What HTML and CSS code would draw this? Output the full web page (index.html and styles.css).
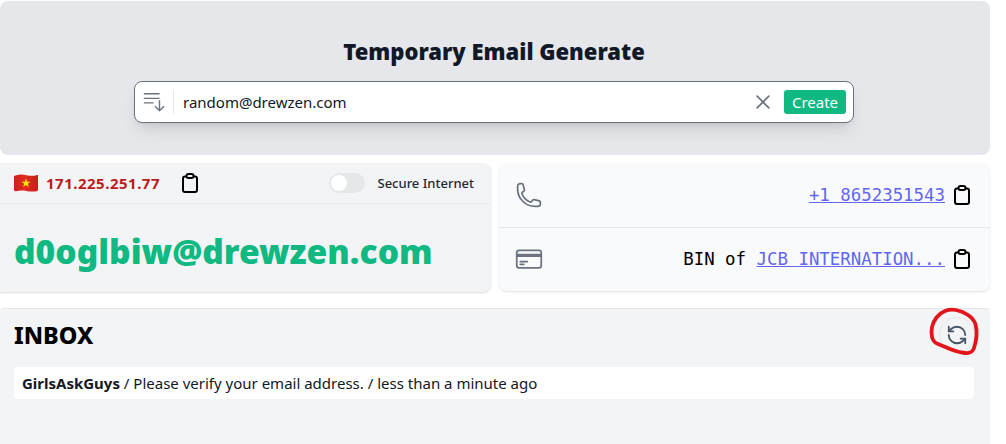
FILE: index.html
```html
<!DOCTYPE html>
<html lang="en">
<head>
<meta charset="utf-8">
<title>Temporary Email Generate</title>
<link rel="stylesheet" href="styles.css">
</head>
<body>
<div class="page">
  <header class="hero">
    <h1 class="hero-title">Temporary Email Generate</h1>
    <div class="search">
      <svg class="search-icon" viewBox="0 0 24 24" fill="none" stroke="currentColor" stroke-width="1.5" stroke-linecap="round" stroke-linejoin="round"><path d="M1.500 3h16M1.500 8h16M1.500 13h9.500M18 10.500v11M13.500 17l4.500 4.500 4.500-4.500"/></svg>
      <span class="search-value">random@drewzen.com</span>
      <svg class="clear-icon" viewBox="0 0 24 24" fill="none" stroke="currentColor" stroke-width="2" stroke-linecap="round"><path d="M5 5l14 14M19 5L5 19"/></svg>
      <button class="create">Create</button>
    </div>
  </header>
  <section class="cards">
    <div class="card-left">
      <div class="ip-row">
        <svg class="flag" viewBox="0 0 24 18"><defs><linearGradient id="flagShade" x1="0" y1="0" x2="1" y2="0"><stop offset="0" stop-color="#c8201c"/><stop offset=".45" stop-color="#e32b22"/><stop offset="1" stop-color="#c4201c"/></linearGradient></defs><path d="M1.500 1.500C7 0 9 .5 12.500 1.200S20 2 22.500 1.200 24 2 24 3v12.500c0 1-.6 1.500-1.500 1.700-3.500.7-7 .3-10.500-.3s-6.500-.5-10 .3C.8 17.400 0 16.800 0 15.800V3c0-.8.500-1.300 1.500-1.500z" fill="url(#flagShade)"/><path d="M12 4.500l1.150 3.300h3.450l-2.800 2 1.050 3.300-2.850-2-2.850 2 1.050-3.300-2.800-2h3.450z" fill="#ffe600"/></svg>
        <span class="ip">171.225.251.77</span>
        <svg class="clip clip-ip" viewBox="0 0 24 24" fill="none" stroke="currentColor" stroke-width="2" stroke-linejoin="round"><path d="M8.500 5.500H7a2 2 0 0 0-2 2V19a2 2 0 0 0 2 2h10a2 2 0 0 0 2-2V7.500a2 2 0 0 0-2-2h-1.500"/><rect x="8.500" y="3" width="7" height="4" rx="2"/></svg>
        <span class="toggle"><span class="knob"></span></span>
        <span class="secure">Secure Internet</span>
      </div>
      <div class="email">d0oglbiw@drewzen.com</div>
    </div>
    <div class="card-right">
      <div class="info-row">
        <svg class="info-icon" viewBox="0 0 24 24" fill="none" stroke="currentColor" stroke-width="1.500" stroke-linecap="round" stroke-linejoin="round"><path d="M2.250 6.750c0 8.284 6.716 15 15 15h2.250a2.250 2.250 0 0 0 2.250-2.250v-1.372c0-.516-.351-.966-.852-1.091l-4.423-1.106c-.44-.11-.902.055-1.173.417l-.97 1.293c-.282.376-.769.542-1.210.380a12.035 12.035 0 0 1-7.143-7.143c-.162-.441.004-.928.380-1.210l1.293-.970c.363-.271.527-.734.417-1.173L6.963 3.102a1.125 1.125 0 0 0-1.091-.852H4.500A2.250 2.250 0 0 0 2.250 4.500z"/></svg>
        <span class="mono"><a href="#">+1 8652351543</a></span>
        <svg class="clip" viewBox="0 0 24 24" fill="none" stroke="currentColor" stroke-width="2" stroke-linejoin="round"><path d="M8.500 5.500H7a2 2 0 0 0-2 2V19a2 2 0 0 0 2 2h10a2 2 0 0 0 2-2V7.500a2 2 0 0 0-2-2h-1.500"/><rect x="8.500" y="3" width="7" height="4" rx="2"/></svg>
      </div>
      <div class="info-row info-row-last">
        <svg class="info-icon" viewBox="0 0 24 24" fill="none" stroke="currentColor" stroke-width="1.500" stroke-linecap="round" stroke-linejoin="round"><rect x="1.500" y="4.500" width="21" height="15" rx="2"/><path d="M1.500 8.250h21M1.500 9.500h21M4.500 14.250h6M4.500 16.500h3"/></svg>
        <span class="mono">BIN of <a href="#">JCB INTERNATION...</a></span>
        <svg class="clip" viewBox="0 0 24 24" fill="none" stroke="currentColor" stroke-width="2" stroke-linejoin="round"><path d="M8.500 5.500H7a2 2 0 0 0-2 2V19a2 2 0 0 0 2 2h10a2 2 0 0 0 2-2V7.500a2 2 0 0 0-2-2h-1.500"/><rect x="8.500" y="3" width="7" height="4" rx="2"/></svg>
      </div>
    </div>
  </section>
  <section class="inbox">
    <div class="inbox-head">
      <h2 class="inbox-title">INBOX</h2>
      <span class="refresh">
        <svg viewBox="0 0 24 24" fill="none" stroke="currentColor" stroke-width="2" stroke-linecap="round" stroke-linejoin="round"><path d="M21 12a9 9 0 0 0-9-9 9.750 9.750 0 0 0-6.740 2.740L3 8"/><path d="M3 3v5h5"/><path d="M3 12a9 9 0 0 0 9 9 9.750 9.750 0 0 0 6.740-2.740L21 16"/><path d="M16 16h5v5"/></svg>
      </span>
    </div>
    <div class="message"><b>GirlsAskGuys</b> / Please verify your email address. / less than a minute ago</div>
  </section>
</div>
<svg class="annotation" viewBox="0 0 54 54" fill="none" stroke="#e3151b" stroke-width="3.800" stroke-linecap="round" stroke-linejoin="round"><path d="M29 5Q35 6 41 10Q47 14 48.500 19.500Q50 25 49.500 31Q49 37 47 43Q45 49 37.500 48Q30 47 23 44Q16 41 11 39Q6 37 5 32Q4 27 5 22Q6 17 9.500 12.500Q13 8 18 6Q23 4 29 5z"/></svg>
</body>
</html>
```
FILE: styles.css
```css
* { box-sizing: border-box; }
html, body { margin: 0; padding: 0; background: #fff; height: 444px; overflow: hidden; }
body { font-family: "Noto Sans", "Open Sans", sans-serif; color: #111827; position: relative; }
.page { width: 990px; padding-top: 1px; }

.hero { height: 154px; background: #e5e7eb; border-radius: 8px; display: flex; flex-direction: column; align-items: center; padding: 36px 2px 0 0; }
.hero-title { margin: 0; font-size: 22px; line-height: 28px; font-weight: 900; color: #111827; white-space: nowrap; }
.search { margin-top: 16px; width: 720px; height: 42px; background: #fff; border: 1px solid #6b7280; border-radius: 8px; box-shadow: 0 10px 15px -3px rgba(0,0,0,.1), 0 4px 6px -4px rgba(0,0,0,.1); display: flex; align-items: center; padding: 0 7px 0 8px; }
.search-icon { width: 22px; height: 22px; color: #6b7280; flex: none; }
.search-value { flex: 1; margin-left: 8px; padding-left: 9px; border-left: 1px solid #e5e7eb; height: 24px; line-height: 24px; font-size: 15px; color: #111827; }
.clear-icon { width: 20px; height: 20px; color: #6b7280; margin-right: 11px; flex: none; }
.create { width: 62px; height: 24px; border: 0; border-radius: 3px; background: #10b981; color: #fff; font: 15px/24px "Noto Sans", sans-serif; padding: 0; }

.cards { display: flex; align-items: flex-start; gap: 8px; margin-top: 8px; }
.card-left { width: 491px; height: 129px; background: #f3f4f6; border-radius: 0 8px 8px 0; box-shadow: 0 1px 2px rgba(0,0,0,.15); }
.ip-row { height: 41px; display: flex; align-items: center; padding: 0 17px 0 14px; border-bottom: 1px solid #e9ebef; }
.flag { width: 24px; height: 18px; flex: none; }
.ip { margin-left: 8px; font-size: 15px; font-weight: 700; color: #b91c1c; letter-spacing: .5px; }
.clip { width: 24px; height: 24px; color: #000; flex: none; margin-left: 5px; }
.clip-ip { margin-left: 18px; }
.toggle { margin-left: auto; width: 36px; height: 20px; border-radius: 10px; background: #e5e7eb; padding: 2px; display: flex; }
.knob { width: 16px; height: 16px; border-radius: 50%; background: #fff; }
.secure { margin-left: 12px; font-size: 13px; font-weight: 500; color: #1f2937; }
.email { padding: 27px 14px 0; font-size: 33.600px; line-height: 40px; font-weight: 900; color: #10b981; white-space: nowrap; }

.card-right { flex: 1; height: 128px; background: #f9fafb; border-radius: 8px; box-shadow: 0 1px 2px rgba(0,0,0,.12); }
.info-row { height: 65px; display: flex; align-items: center; padding: 0 16px; border-bottom: 1px solid #e5e7eb; }
.info-row-last { height: 62px; border-bottom: 0; }
.info-icon { width: 28px; height: 28px; color: #6b7280; flex: none; margin-right: auto; }
.mono { font-family: "DejaVu Sans Mono", "Liberation Mono", monospace; font-size: 17.400px; color: #000; white-space: pre; }
.mono a { color: #6366f1; text-decoration: underline; }

.inbox { margin-top: 16px; height: 136px; background: #f3f4f6; border-top: 1px solid #e5e7eb; border-radius: 4px 4px 0 0; padding: 0 16px 0 14px; }
.inbox-head { height: 52px; display: flex; align-items: center; justify-content: space-between; }
.inbox-title { margin: 0; font-size: 23.500px; line-height: 28px; font-weight: 800; color: #000; }
.refresh { width: 36px; height: 36px; border-radius: 50%; border: 1px solid #e5e7eb; display: flex; align-items: center; justify-content: center; color: #475569; margin-right: -1px; }
.refresh svg { width: 22px; height: 22px; }
.message { height: 32px; margin-top: 6px; background: #fff; border-radius: 4px; padding: 0 8px; line-height: 32px; font-size: 15px; color: #111827; white-space: nowrap; }
.message b { font-weight: 700; color: #111827; }

.annotation { position: absolute; left: 927px; top: 305px; width: 54px; height: 54px; }
```
